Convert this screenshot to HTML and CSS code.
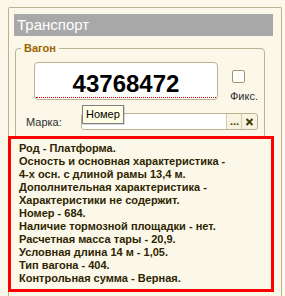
FILE: index.html
```html
<!DOCTYPE html>
<html lang="ru">
<head>
  <meta charset="UTF-8" />
  <title>Транспорт</title>
  <link rel="stylesheet" href="styles.css">
</head>
<body>
  <div class="frame">
    <div class="frame-title">Транспорт</div>

    <fieldset class="group">
      <legend>Вагон</legend>
      <div class="group-body">
        <div class="row-top">
          <div class="number-box">
            <div class="number-value">43768472</div>
          </div>
          <div class="fix">
            <span class="checkbox"></span>
            <span class="fix-label">Фикс.</span>
          </div>
        </div>

        <div class="row-mark">
          <span class="mark-label">Марка:</span>
          <div class="field">
            <div class="field-input"></div>
            <div class="field-btn dots">...</div>
            <div class="field-btn clear">
              <svg width="9" height="8" viewBox="0 0 9 8">
                <path d="M1.5 1l6 6M7.5 1l-6 6" stroke="#4a3c05" stroke-width="2" fill="none"/>
              </svg>
            </div>
            <div class="tooltip">Номер</div>
          </div>
        </div>
      </div>
    </fieldset>

    <div class="info">
      Род - Платформа.<br>
      Осность и основная характеристика -<br>
      4-х осн. с длиной рамы 13,4 м.<br>
      Дополнительная характеристика -<br>
      Характеристики не содержит.<br>
      Номер - 684.<br>
      Наличие тормозной площадки - нет.<br>
      Расчетная масса тары - 20,9.<br>
      Условная длина 14 м - 1,05.<br>
      Тип вагона - 404.<br>
      Контрольная сумма - Верная.
    </div>
  </div>
</body>
</html>
```

FILE: styles.css
```css
html, body {
  height: 296px;
  overflow: hidden;
}

body {
  margin: 0;
  background-color: #fbf8ea;
  font-family: "Liberation Sans", Arial, sans-serif;
  font-size: 11px;
  color: #2e2e2e;
}

/* outer panel runs off the bottom edge, so no bottom border */
.frame {
  margin: 7px 3px 0 8px;
  padding: 6px 8px 7px 5px;
  border: 1px solid #bab290;
  border-bottom: none;
  border-radius: 2px 2px 0 0;
}

.frame-title {
  height: 22px;
  line-height: 22px;
  padding-left: 3px;
  background-color: #a8a8a8;
  color: #fff;
  font-size: 15px;
}

.group {
  margin: 6px 10px 0 1px;
  padding: 0;
  border: 1px solid #bab290;
  border-radius: 4px;
}

.group legend {
  margin-left: 5px;
  padding: 0 3px;
  line-height: 13px;
  font-weight: bold;
  color: #9c6300;
}

.group-body {
  padding: 7px 6px 8px 10px;
}

.row-top {
  display: flex;
  align-items: flex-start;
}

.number-box {
  width: 184px;
  height: 38px;
  margin-left: 8px;
  box-sizing: border-box;
  border: 1px solid #bab290;
  border-radius: 4px;
  background-color: #fff;
}

.number-value {
  margin: 0 1px;
  padding: 9px 0 1px;
  line-height: 24px;
  font-size: 24px;
  font-weight: bold;
  color: #000;
  text-align: center;
  border-bottom: 1px dotted #d00000;
}

.fix {
  display: flex;
  flex-direction: column;
  margin-left: 12px;
  white-space: nowrap;
}

.checkbox {
  width: 13px;
  height: 13px;
  margin: 8px 0 0 2px;
  box-sizing: border-box;
  border: 1px solid #9d9679;
  border-radius: 2px;
  background-color: #fffef8;
}

.fix-label {
  margin-top: 7px;
  line-height: 13px;
}

.row-mark {
  display: flex;
  align-items: center;
  margin-top: 10px;
}

.mark-label {
  width: 55px;
}

.field {
  position: relative;
  flex: 1;
  display: flex;
  height: 17px;
  box-sizing: border-box;
  border: 1px solid #bab290;
  border-radius: 3px;
  background-color: #f7f3e0;
}

.field-input {
  flex: 1;
  background-color: #fff;
  border-radius: 2px 0 0 2px;
}

.field-btn {
  width: 15px;
  border-left: 1px solid #d2cbac;
  box-sizing: border-box;
  color: #4a3c05;
  text-align: center;
}

.dots {
  line-height: 15px;
  font-weight: bold;
  padding-left: 1px;
}

.clear {
  width: 16px;
  display: flex;
  align-items: center;
  justify-content: center;
}

.tooltip {
  position: absolute;
  left: 0;
  top: -9px;
  width: 42px;
  height: 19px;
  box-sizing: border-box;
  line-height: 17px;
  padding-left: 3px;
  border: 1px solid #808080;
  background-color: #fffde4;
  color: #000;
  box-shadow: 1px 1px 0 rgba(0, 0, 0, 0.15);
}

.info {
  position: relative;
  width: 266px;
  margin: -3px 0 0 -6px;
  padding: 3px 0 4px 8px;
  box-sizing: border-box;
  border: 3px solid #ff0000;
  background-color: #fbf8ea;
  line-height: 13px;
  font-weight: bold;
  color: #2e2500;
  white-space: nowrap;
}
```
